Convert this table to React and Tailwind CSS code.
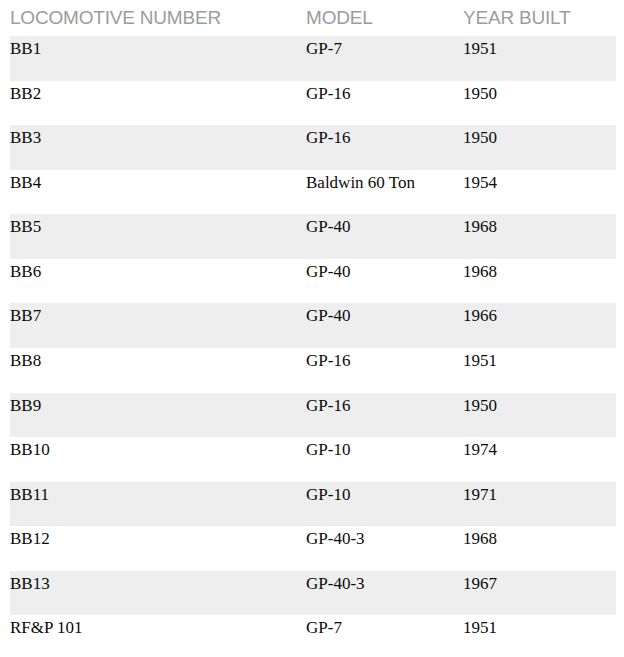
const ROWS = [
  ['BB1', 'GP-7', '1951'],
  ['BB2', 'GP-16', '1950'],
  ['BB3', 'GP-16', '1950'],
  ['BB4', 'Baldwin 60 Ton', '1954'],
  ['BB5', 'GP-40', '1968'],
  ['BB6', 'GP-40', '1968'],
  ['BB7', 'GP-40', '1966'],
  ['BB8', 'GP-16', '1951'],
  ['BB9', 'GP-16', '1950'],
  ['BB10', 'GP-10', '1974'],
  ['BB11', 'GP-10', '1971'],
  ['BB12', 'GP-40-3', '1968'],
  ['BB13', 'GP-40-3', '1967'],
  ['RF&P 101', 'GP-7', '1951'],
]

export default function App() {
  return (
    <div className="bg-white px-[10px] w-[624px] h-[657px] overflow-hidden">
      <table className="w-[606px] border-collapse table-fixed">
        <colgroup>
          <col className="w-[296px]" />
          <col className="w-[157px]" />
          <col className="w-[153px]" />
        </colgroup>
        <thead>
          <tr className="h-[36px]">
            {['Locomotive Number', 'Model', 'Year Built'].map(h => (
              <th
                key={h}
                className="text-left align-top pt-[6px] font-normal uppercase text-[19px] leading-[24px] tracking-[-0.2px] text-[#9c9c9c] font-['Liberation_Sans',Arial,sans-serif]"
              >
                {h}
              </th>
            ))}
          </tr>
        </thead>
        <tbody>
          {ROWS.map((r, i) => (
            <tr key={r[0]} className={`h-[44.57px] ${i % 2 === 0 ? 'bg-[#eeeeee]' : 'bg-white'}`}>
              {r.map((c, j) => (
                <td
                  key={j}
                  className="align-top pt-[1px] text-[17px] leading-[24px] text-[#0a0a0a] font-['Liberation_Serif','Times_New_Roman',serif]"
                >
                  {c}
                </td>
              ))}
            </tr>
          ))}
        </tbody>
      </table>
    </div>
  )
}
